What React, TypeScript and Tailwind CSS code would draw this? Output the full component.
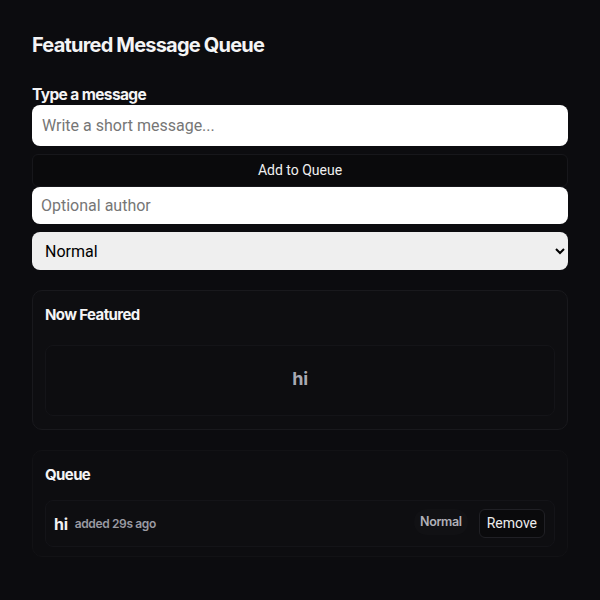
import { useState } from "react";

const heading = "font-['Inter',sans-serif] font-bold tracking-[-0.04em] text-[#f4f4f5]";

const App = () => {
  const [message, setMessage] = useState("");
  const [author, setAuthor] = useState("");
  const [priority, setPriority] = useState("Normal");

  return (
    <div className="min-h-[600px] bg-[#0c0c0f] px-8 pt-[33px] pb-10 font-['Roboto',sans-serif]">
      <h1 className={`${heading} text-[20px] leading-[24px]`}>Featured Message Queue</h1>

      <div className="mt-[29px]">
        <label className={`${heading} block text-[15.5px] leading-[18px]`}>Type a message</label>
        <input
          value={message}
          onChange={(e) => setMessage(e.target.value)}
          placeholder="Write a short message..."
          className="mt-[1px] block h-[41px] w-full rounded-[8px] bg-white px-[10px] text-[16px] text-black placeholder:text-[#767676] outline-none"
        />
        <button className="mt-[8px] block h-[33px] w-full rounded-[6px] border border-[#17171b] bg-[#0a0a0c] text-[14px] text-[#f0f0f0]">
          Add to Queue
        </button>
        <input
          value={author}
          onChange={(e) => setAuthor(e.target.value)}
          placeholder="Optional author"
          className="block h-[37px] w-full rounded-[8px] bg-white px-[9px] text-[16px] text-black placeholder:text-[#767676] outline-none"
        />
        <select
          value={priority}
          onChange={(e) => setPriority(e.target.value)}
          className="mt-[8px] block h-[38px] w-full rounded-[8px] bg-[#efefef] pl-[9px] pr-2 text-[16px] text-black outline-none"
        >
          <option>Normal</option>
          <option>High</option>
        </select>
      </div>

      <div className="mt-[20px] rounded-[10px] border border-[#19191d] bg-[#0e0e11] px-3 pt-[14px] pb-[13px]">
        <h2 className={`${heading} text-[15px] leading-[20px]`}>Now Featured</h2>
        <div className="mt-[20px] flex h-[71px] items-center justify-center rounded-[8px] border border-[#141418] bg-[#0d0d10] pb-[4px]">
          <span className={`font-['Inter',sans-serif] font-bold text-[18px] tracking-[-0.02em] text-[#a9a9b2]`}>hi</span>
        </div>
      </div>

      <div className="mt-[20px] rounded-[10px] border border-[#121215] bg-[#0d0d10] px-3 pt-[14px] pb-[9px]">
        <h2 className={`${heading} text-[15px] leading-[20px]`}>Queue</h2>
        <div className="mt-[15px] flex h-[47px] items-center rounded-[8px] border border-[#141418] bg-[#0e0e11] pl-[8px] pr-[9px]">
          <span className={`font-['Inter',sans-serif] font-bold text-[16px] tracking-[-0.02em] text-[#f0f0f2]`}>hi</span>
          <span className="ml-[7px] font-['Inter',sans-serif] font-semibold text-[12px] tracking-[-0.03em] text-[#9a9aa3]">added 29s ago</span>
          <span className="ml-auto -mt-[3px] rounded-full bg-[#111114] px-[6px] py-[4px] font-['Inter',sans-serif] font-semibold text-[12.5px] tracking-[-0.03em] text-[#b0b0b8]">
            Normal
          </span>
          <button className="ml-[11px] h-[29px] rounded-[6px] border border-[#202025] bg-[#0a0a0c] px-[7px] text-[14px] text-[#ededed]">
            Remove
          </button>
        </div>
      </div>
    </div>
  );
};

export default App;
